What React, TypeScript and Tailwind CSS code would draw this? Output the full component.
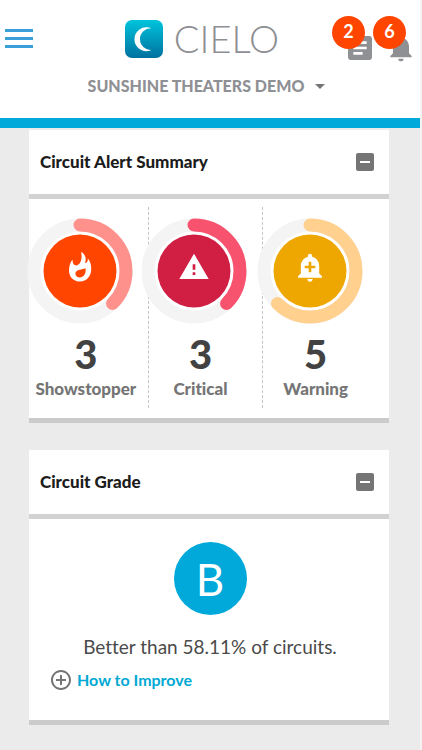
import React from "react";
import {
  MdAddAlert,
  MdArticle,
  MdArrowDropDown,
  MdControlPoint,
  MdIndeterminateCheckBox,
  MdNotifications,
  MdWarning,
} from "react-icons/md";

function Logo() {
  return (
    <svg className="h-[38px] w-[38px]" viewBox="0 0 38 38" aria-hidden="true">
      <defs>
        <linearGradient id="logo-fill" x1="0" y1="0" x2="0" y2="1">
          <stop offset="0" stopColor="#00c4dc" />
          <stop offset="1" stopColor="#00719f" />
        </linearGradient>
      </defs>
      <rect width="38" height="38" rx="7" fill="url(#logo-fill)" />
      <path d="M26.5 8.3A12 12 0 1 0 27 29.8A10.8 10.8 0 1 1 26.5 8.3Z" fill="#fff" />
    </svg>
  );
}

function Flame() {
  return (
    <svg className="h-8 w-8" viewBox="0 0 32 32" fill="#fff" aria-hidden="true">
      <path
        fillRule="evenodd"
        d="M17 1C22 3.6 22.4 8 21 12C23 11.8 24 10.2 23.8 7.6C26.4 10.4 27.4 14.4 27.2 18.6C27 25.6 22.6 30.5 16.2 30.5C9.6 30.5 5 26 5 19.4C5 15 6.2 11.4 8.6 8.4C8.4 12 9.6 14.4 12.2 14.4C16.4 14 18.8 7.6 17 1ZM21.4 17C19 19 11.8 18 11.4 22.6C11.4 25.2 13.4 26.6 16 26.6C20.4 26.2 22.4 21.4 21.4 17Z"
      />
    </svg>
  );
}

const alerts = [
  {
    label: "Showstopper", count: 3, arc: 37.5, stroke: "#ff918c", fill: "#ff4500",
    divider: "border-r border-dashed border-[#c4c4c4]", icon: <Flame />,
  },
  {
    label: "Critical", count: 3, arc: 37.5, stroke: "#f8536e", fill: "#d11f44",
    divider: "border-r border-dashed border-[#c4c4c4]", icon: <MdWarning className="h-8 w-8" />,
  },
  {
    label: "Warning", count: 5, arc: 62.5, stroke: "#ffd08e", fill: "#eea700",
    divider: "", icon: <MdAddAlert className="h-8 w-8" />,
  },
];

function Ring({ arc, stroke, fill, icon }: { arc: number; stroke: string; fill: string; icon: React.ReactNode }) {
  return (
    <div className="relative -ml-3 grid h-[106px] w-[106px] place-items-center text-white">
      <svg className="col-start-1 row-start-1 h-[106px] w-[106px]" viewBox="0 0 106 106" aria-hidden="true">
        <circle cx="53" cy="53" r="46" fill="#fff" stroke="#f4f4f4" strokeWidth="13" />
        <circle
          cx="53" cy="53" r="46" fill="none" stroke={stroke} strokeWidth="13" strokeLinecap="round"
          pathLength="100" strokeDasharray={`${arc} 100`} transform="rotate(-90 53 53)"
        />
        <circle cx="53" cy="53" r="36.5" fill={fill} />
      </svg>
      <span className="z-10 col-start-1 row-start-1 pb-2">{icon}</span>
    </div>
  );
}

function Card({ title, children }: { title: string; children: React.ReactNode }) {
  return (
    <section className="border-b-[5px] border-[#cbcbcb] bg-white">
      <header className="flex h-[69px] items-center justify-between border-b-[5px] border-[#d2d2d2] pr-3 pl-[11px]">
        <h2 className="text-[17px] font-black text-[#1c1c1c]">{title}</h2>
        <button type="button" aria-label={`Collapse ${title}`} className="text-[#757575]">
          <MdIndeterminateCheckBox className="h-6 w-6" />
        </button>
      </header>
      {children}
    </section>
  );
}

function Badge({ count }: { count: number }) {
  return (
    <span className="absolute top-0 left-0 flex h-[33px] w-[33px] items-center justify-center rounded-full bg-[#ff4500] pb-1 text-lg font-bold text-white">
      {count}
    </span>
  );
}

export default function App() {
  return (
    <div className="min-h-screen bg-[#f3f3f3] pr-0.5 font-['Lato','Open_Sans',sans-serif] [font-variant-ligatures:none]">
      <div className="min-h-screen bg-[#ebebeb]">
        <header className="border-b-[10px] border-[#00a9d9] bg-white">
          <div className="grid h-[118px] grid-cols-[1fr_auto_1fr] grid-rows-[58px_auto] px-[5px]">
            <button type="button" aria-label="Open menu" className="mt-[29px] flex w-7 flex-col gap-[5px] self-start">
              <span className="h-[3px] w-full bg-[#3a9fdb]" />
              <span className="h-[3px] w-full bg-[#3a9fdb]" />
              <span className="h-[3px] w-full bg-[#3a9fdb]" />
            </button>
            <div className="flex items-start gap-[11px] pt-5 pr-4">
              <Logo />
              <span className="text-[38px] leading-9 font-light text-[#8e8f93]">CIELO</span>
            </div>
            <div className="flex justify-end gap-2 pt-4 pr-[9px] text-[#8f9094]">
              <button type="button" aria-label="Messages" className="relative flex h-12 w-[33px] justify-end">
                <MdArticle className="mt-4 -mr-[11px] h-8 w-8 shrink-0" />
                <Badge count={2} />
              </button>
              <button type="button" aria-label="Notifications" className="relative flex h-12 w-[33px] justify-end">
                <MdNotifications className="mt-4 -mr-[11px] h-8 w-8 shrink-0" />
                <Badge count={6} />
              </button>
            </div>
            <button
              type="button"
              className="col-span-3 mt-4 flex h-6 items-center gap-1 justify-self-center text-base font-black text-[#8f9094]"
            >
              SUNSHINE THEATERS DEMO
              <MdArrowDropDown className="h-6 w-6 text-[#757575]" />
            </button>
          </div>
        </header>

        <main className="flex flex-col gap-[27px] pt-0.5 pr-[31px] pb-6 pl-[29px]">
          <Card title="Circuit Alert Summary">
            <div className="grid grid-cols-3 pt-2 pr-[11px] pb-[10px] pl-[5px]">
              {alerts.map((a) => (
                <div key={a.label} className={`flex flex-col items-center pt-[11px] pr-[10px] pb-[7px] ${a.divider}`}>
                  <Ring arc={a.arc} stroke={a.stroke} fill={a.fill} icon={a.icon} />
                  <p className="mt-[7px] text-[40px] leading-[46px] font-black text-[#424242]">{a.count}</p>
                  <p className="text-[17px] leading-6 font-black text-[#757575]">{a.label}</p>
                </div>
              ))}
            </div>
          </Card>

          <Card title="Circuit Grade">
            <div className="pt-[23px] pr-5 pb-7 pl-[22px]">
              <div className="mx-auto flex h-[73px] w-[73px] items-center justify-center rounded-full bg-[#00a9d9] text-[44px] text-white">
                B
              </div>
              <p className="mt-[18px] text-center text-[19px] leading-7 text-[#4a4a4a]">Better than 58.11% of circuits.</p>
              <a href="#improve" className="mt-[7px] -ml-0.5 flex items-center gap-1 text-base font-bold text-[#00a9d3]">
                <MdControlPoint className="h-6 w-6 text-[#757575]" />
                How to Improve
              </a>
            </div>
          </Card>
        </main>
      </div>
    </div>
  );
}
